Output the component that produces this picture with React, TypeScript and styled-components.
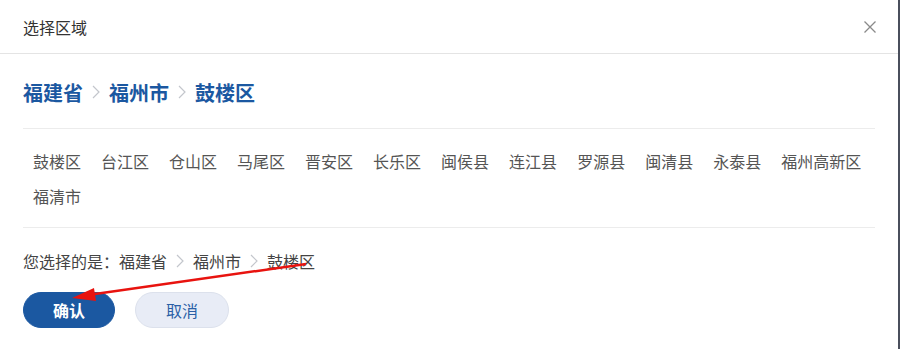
import { Fragment } from "react";
import styled, { createGlobalStyle } from "styled-components";

const GlobalStyle = createGlobalStyle`
    html, body {
        margin: 0;
        padding: 0;
        background: #4a4f5c;
    }
    body {
        font-family: "Liberation Sans", "Noto Sans CJK SC", sans-serif;
    }
`;

const Modal = styled.div`
    position: relative;
    width: 898px;
    height: 349px;
    background: #fff;
    box-sizing: border-box;
`;

const Header = styled.div`
    height: 54px;
    display: flex;
    align-items: center;
    justify-content: space-between;
    padding: 0 21px 0 23px;
    border-bottom: 1px solid #e4e4e4;
    box-sizing: border-box;
`;

const Title = styled.div`
    font-size: 16px;
    color: #333;
`;

const CloseBtn = styled.button`
    border: none;
    background: none;
    padding: 0;
    width: 14px;
    height: 14px;
    display: flex;
    cursor: pointer;
`;

const Body = styled.div`
    padding: 0 23px;
`;

const Crumbs = styled.div`
    height: 75px;
    display: flex;
    align-items: center;
    gap: 9px;
    border-bottom: 1px solid #ececec;
    font-size: 20px;
    font-weight: 700;
    color: #1b58a1;
    padding-top: 2px;
    box-sizing: border-box;
`;

const Chevron = ({ size = 8, color = "#c3c6cc" }: { size?: number; color?: string }) => (
    <svg width={size} height={size * 1.75} viewBox="0 0 8 14" fill="none">
        <path d="M1 1l6 6-6 6" stroke={color} strokeWidth="1.2" />
    </svg>
);

const AreaList = styled.div`
    display: flex;
    flex-wrap: wrap;
    column-gap: 20px;
    padding: 16px 10px 12px;
    border-bottom: 1px solid #ececec;
`;

const AreaItem = styled.span`
    font-size: 16px;
    line-height: 35px;
    color: #555;
    cursor: pointer;
`;

const Selected = styled.div`
    display: flex;
    align-items: center;
    gap: 9px;
    height: 64px;
    padding-top: 1px;
    box-sizing: border-box;
    font-size: 16px;
    color: #444;
`;

const Actions = styled.div`
    display: flex;
    gap: 20px;
`;

const Button = styled.button<{ $primary?: boolean }>`
    height: 36px;
    width: ${p => (p.$primary ? 92 : 94)}px;
    border-radius: 18px;
    font-size: 16px;
    font-family: inherit;
    cursor: pointer;
    border: 1px solid ${p => (p.$primary ? "#1b58a1" : "#dce1ec")};
    background: ${p => (p.$primary ? "#1b58a1" : "#e8ecf6")};
    color: ${p => (p.$primary ? "#fff" : "#2b5fa6")};
    font-weight: ${p => (p.$primary ? 700 : 400)};
`;

const Annotation = styled.svg`
    position: absolute;
    left: 0;
    top: 0;
    pointer-events: none;
`;

const areas = [
    "鼓楼区", "台江区", "仓山区", "马尾区", "晋安区", "长乐区", "闽侯县",
    "连江县", "罗源县", "闽清县", "永泰县", "福州高新区", "福清市",
];

const path = ["福建省", "福州市", "鼓楼区"];

export default function App() {
    return (
        <>
            <GlobalStyle />
            <Modal>
                <Header>
                    <Title>选择区域</Title>
                    <CloseBtn>
                        <svg width="14" height="14" viewBox="0 0 14 14">
                            <path d="M1.5 1.5l11 11M12.5 1.5l-11 11" stroke="#8a8a8a" strokeWidth="1.3" />
                        </svg>
                    </CloseBtn>
                </Header>
                <Body>
                    <Crumbs>
                        {path.map((p, i) => (
                            <Fragment key={p}>
                                {i > 0 && <Chevron />}
                                <span>{p}</span>
                            </Fragment>
                        ))}
                    </Crumbs>
                    <AreaList>
                        {areas.map(a => (
                            <AreaItem key={a}>{a}</AreaItem>
                        ))}
                    </AreaList>
                    <Selected>
                        <span>您选择的是：福建省</span>
                        <Chevron />
                        <span>福州市</span>
                        <Chevron />
                        <span>鼓楼区</span>
                    </Selected>
                    <Actions>
                        <Button $primary>确认</Button>
                        <Button>取消</Button>
                    </Actions>
                </Body>
                <Annotation width="898" height="349">
                    <line x1="306" y1="264" x2="88" y2="295" stroke="#e8130f" strokeWidth="2.5" />
                    <polygon points="72,298 94,288 96,301" fill="#e8130f" />
                </Annotation>
            </Modal>
        </>
    );
}
